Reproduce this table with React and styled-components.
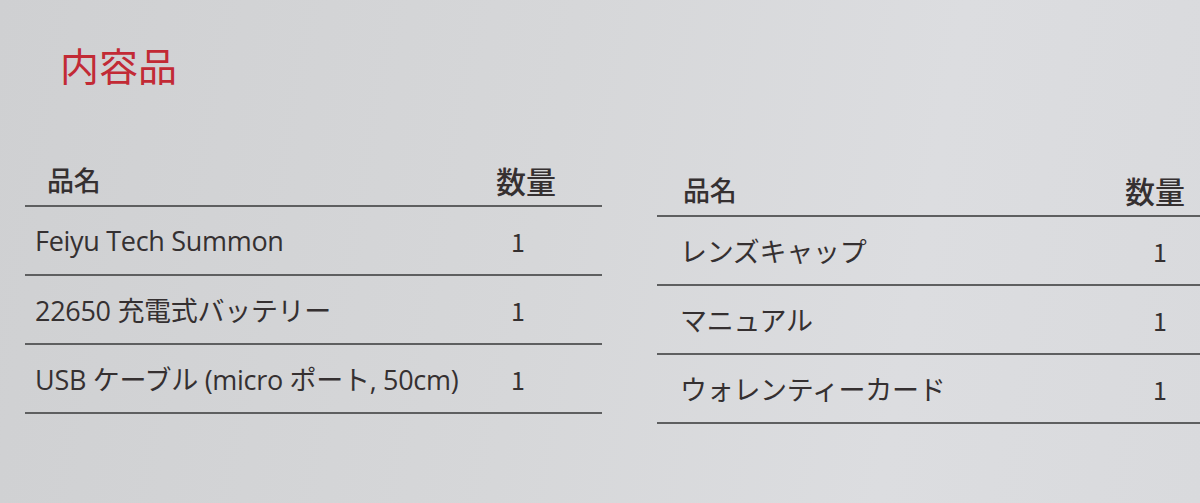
import React from 'react';
import styled, { createGlobalStyle } from 'styled-components';

const GlobalStyle = createGlobalStyle`
  html, body {
    margin: 0;
    padding: 0;
  }
  body {
    width: 1200px;
    height: 503px;
    overflow: hidden;
    font-family: "Open Sans", "Noto Sans CJK JP", sans-serif;
    color: #353031;
  }
`;

const Sheet = styled.div`
  width: 1200px;
  height: 503px;
  box-sizing: border-box;
  padding-top: 42px;
  overflow: hidden;
  background: linear-gradient(100deg, #cfd0d2 0%, #d6d7d9 45%, #dcdde0 75%, #d9dadd 100%);
`;

const Title = styled.h1`
  margin: 0 0 0 60px;
  font-family: "Noto Sans CJK JP", sans-serif;
  font-size: 39px;
  line-height: 44px;
  font-weight: 400;
  color: #c22a35;
`;

const Tables = styled.div`
  display: flex;
  align-items: flex-start;
  gap: 55px;
  margin-top: 68px;
  padding-left: 25px;
`;

const Table = styled.div`
  flex: none;
  width: ${({ $width }) => $width}px;
  margin-top: ${({ $offset }) => $offset || 0}px;
`;

const Row = styled.div`
  display: grid;
  grid-template-columns: 468px 1fr;
  align-items: center;
  height: ${({ $head }) => ($head ? 51 : 67)}px;
  border-bottom: 2px solid #5e5f60;
`;

const Name = styled.div`
  padding-left: ${({ $pad }) => $pad}px;
  font-size: 27px;
  font-weight: ${({ $head }) => ($head ? 500 : 400)};
  font-family: ${({ $head }) =>
    $head ? '"Noto Sans CJK JP", sans-serif' : '"Open Sans", "Noto Sans CJK JP", sans-serif'};
  white-space: nowrap;
  letter-spacing: -0.3px;
`;

const Qty = styled.div`
  padding-left: ${({ $pad }) => $pad}px;
  font-size: ${({ $head }) => ($head ? 30 : 25)}px;
  font-weight: ${({ $head }) => ($head ? 500 : 400)};
  font-family: "Noto Sans CJK JP", sans-serif;
  white-space: nowrap;
`;

const left = [
  'Feiyu Tech Summon',
  '22650 充電式バッテリー',
  'USB ケーブル (micro ポート, 50cm)',
];

const right = ['レンズキャップ', 'マニュアル', 'ウォレンティーカード'];

const ItemTable = ({ items, width, offset, headPad, namePad, qtyHeadPad, qtyPad }) => (
  <Table $width={width} $offset={offset}>
    <Row $head>
      <Name $head $pad={headPad}>品名</Name>
      <Qty $head $pad={qtyHeadPad}>数量</Qty>
    </Row>
    {items.map((item) => (
      <Row key={item}>
        <Name $pad={namePad}>{item}</Name>
        <Qty $pad={qtyPad}>1</Qty>
      </Row>
    ))}
  </Table>
);

export default function App() {
  return (
    <>
      <GlobalStyle />
      <Sheet>
        <Title>内容品</Title>
        <Tables>
          <ItemTable items={left} width={577} headPad={22} namePad={10} qtyHeadPad={3} qtyPad={18} />
          <ItemTable items={right} width={560} offset={10} headPad={26} namePad={23} qtyHeadPad={-4} qtyPad={28} />
        </Tables>
      </Sheet>
    </>
  );
}
